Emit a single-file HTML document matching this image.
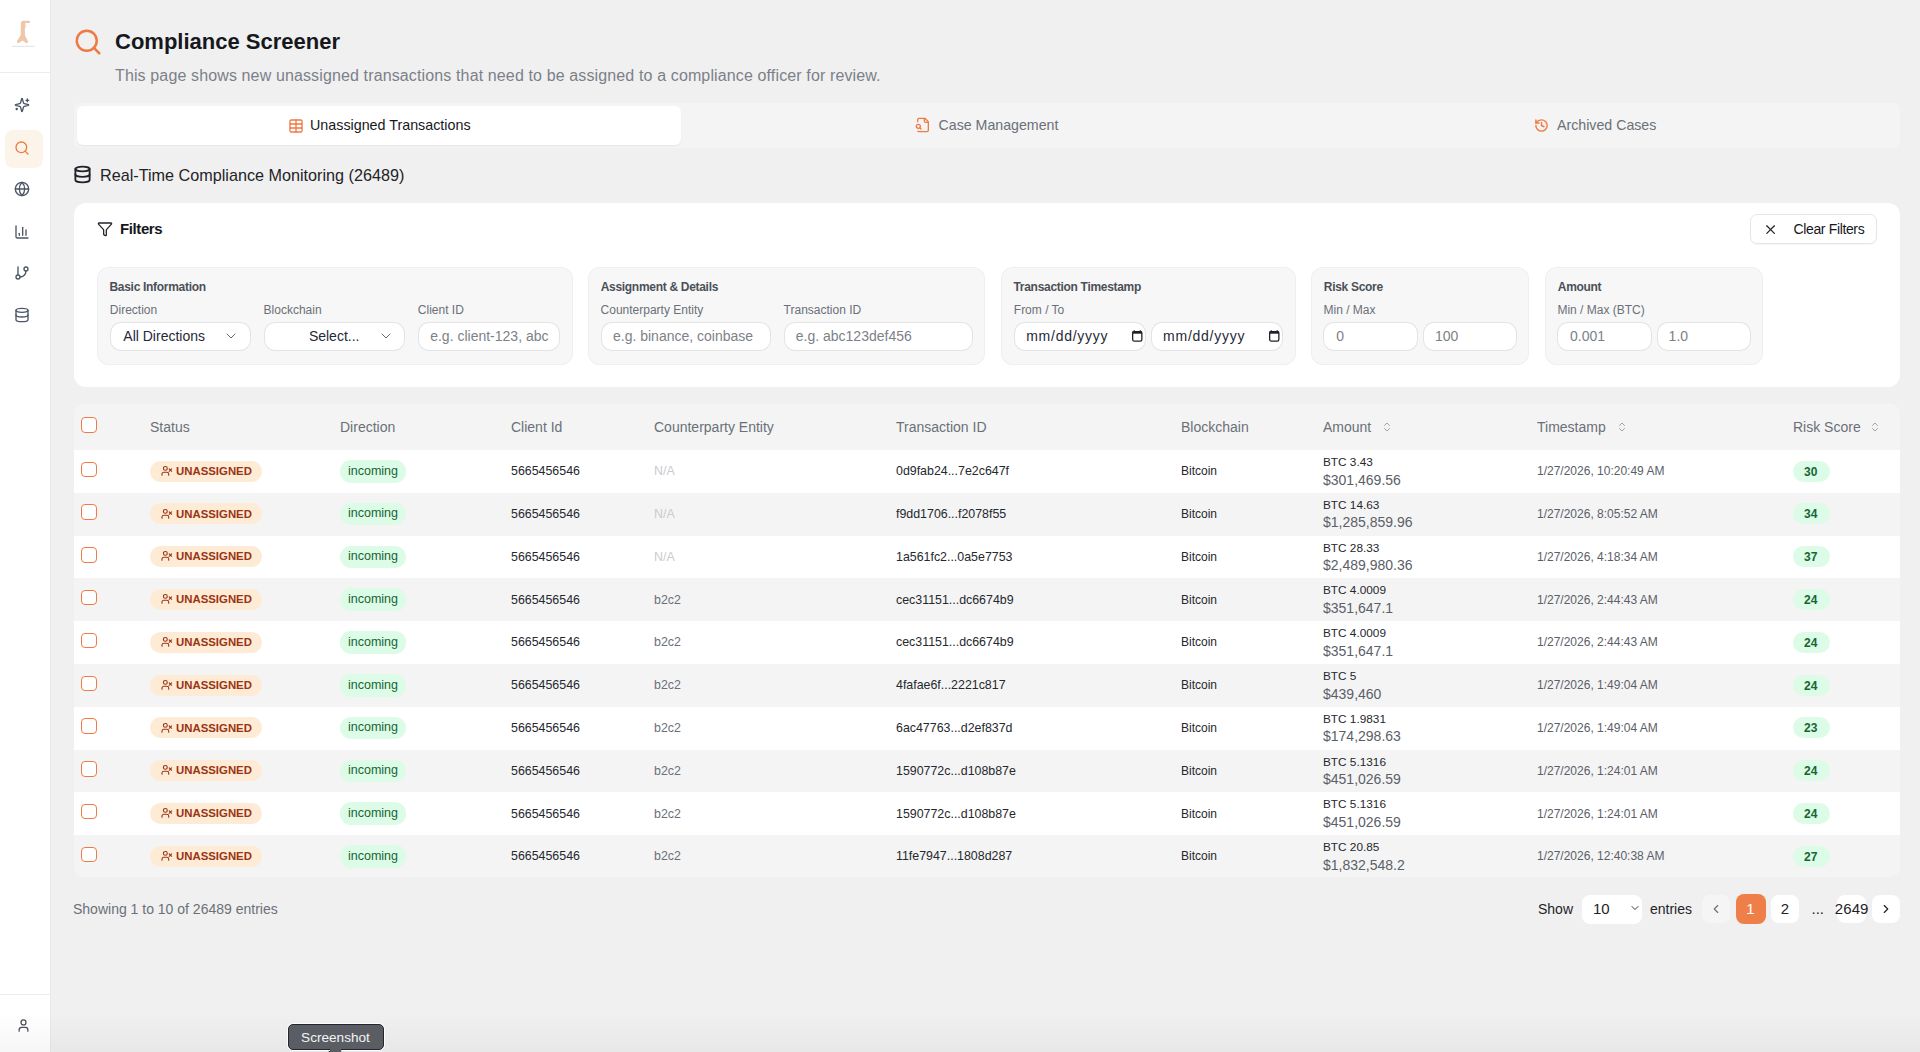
<!DOCTYPE html>
<html><head><meta charset="utf-8">
<style>
*{box-sizing:border-box;margin:0;padding:0}
html,body{width:1920px;height:1052px;overflow:hidden;background:#f0f0f0;font-family:"Liberation Sans",sans-serif;color:#111827}
.a{position:absolute;white-space:nowrap}
.ic{position:absolute;fill:none;stroke-linecap:round;stroke-linejoin:round;overflow:visible}
.grp{position:absolute;top:267px;height:97.5px;background:#f7f7f7;box-shadow:inset 0 0 0 1px #efefef;border-radius:12px}
.gt{position:absolute;top:12.5px;left:12.5px;font-size:12px;font-weight:700;color:#4b5058;letter-spacing:-0.3px;line-height:14px}
.gl{position:absolute;top:35.5px;font-size:12px;color:#6b7078;line-height:14px}
.inp{position:absolute;top:55px;height:29px;background:#fff;box-shadow:inset 0 0 0 1px #e4e4e4;border-radius:11px;font-size:14px;line-height:29px;color:#1f2937}
.ph{color:#7d8188}
.row{position:absolute;left:0;width:1826px;height:43px}
.cell{position:absolute;font-size:12.4px;color:#25282d;white-space:nowrap}
.cb{position:absolute;left:7.4px;width:15.6px;height:15.6px;border:1.3px solid #ee7b45;border-radius:4px;background:#fff}
.bdg{position:absolute;height:21px;border-radius:11px}
</style></head><body>

<div class="a" style="left:0;top:0;width:51px;height:1052px;background:#fff;border-right:1px solid #eaeaea"></div>
<div class="a" style="left:0;top:72px;width:50px;height:1px;background:#ececec"></div>
<div class="a" style="left:0;top:994px;width:50px;height:1px;background:#ececec"></div>
<svg class="a" style="left:0;top:0" width="50" height="60" viewBox="0 0 50 60"><g fill="#f0c6ab"><rect x="21.5" y="20.8" width="8.6" height="2.2" rx="1"/><path d="M21 22 L25.2 22 L25.6 26 L24.8 30 L25.2 36.5 L20.6 37 L20.8 30 Z"/><path d="M20.4 35.5 L25 35.5 L28.2 41.8 L26.6 43.6 L22.6 40.6 L18 43.6 L16.8 41.5 Z"/></g><rect x="12" y="45.8" width="22.7" height="1" fill="#e0e0e0"/></svg>
<div class="a" style="left:5px;top:130px;width:38px;height:38px;background:#fdf4e9;border-radius:8px"></div>
<svg class="ic" style="left:14px;top:97px;stroke:#4b5563;stroke-width:2px" width="16" height="16" viewBox="0 0 24 24"><path d="M9.937 15.5A2 2 0 0 0 8.5 14.063l-6.135-1.582a.5.5 0 0 1 0-.962L8.5 9.936A2 2 0 0 0 9.937 8.5l1.582-6.135a.5.5 0 0 1 .963 0L14.063 8.5A2 2 0 0 0 15.5 9.937l6.135 1.581a.5.5 0 0 1 0 .964L15.5 14.063a2 2 0 0 0-1.437 1.437l-1.582 6.135a.5.5 0 0 1-.963 0z"/><path d="M20 3v4"/><path d="M22 5h-4"/><path d="M4 17v2"/><path d="M5 18H3"/></svg>
<svg class="ic" style="left:14px;top:139.5px;stroke:#ee7b45;stroke-width:2px" width="16" height="16" viewBox="0 0 24 24"><circle cx="11" cy="11" r="8"/><path d="m21 21-4.3-4.3"/></svg>
<svg class="ic" style="left:14px;top:181px;stroke:#4b5563;stroke-width:2px" width="16" height="16" viewBox="0 0 24 24"><circle cx="12" cy="12" r="10"/><path d="M12 2a14.5 14.5 0 0 0 0 20 14.5 14.5 0 0 0 0-20"/><path d="M2 12h20"/></svg>
<svg class="ic" style="left:14px;top:223.5px;stroke:#4b5563;stroke-width:2px" width="16" height="16" viewBox="0 0 24 24"><path d="M3 3v16a2 2 0 0 0 2 2h16"/><path d="M18 17V9"/><path d="M13 17V5"/><path d="M8 17v-3"/></svg>
<svg class="ic" style="left:14px;top:265px;stroke:#4b5563;stroke-width:2px" width="16" height="16" viewBox="0 0 24 24"><line x1="6" x2="6" y1="3" y2="15"/><circle cx="18" cy="6" r="3"/><circle cx="6" cy="18" r="3"/><path d="M18 9a9 9 0 0 1-9 9"/></svg>
<svg class="ic" style="left:14px;top:307px;stroke:#4b5563;stroke-width:2px" width="16" height="16" viewBox="0 0 24 24"><ellipse cx="12" cy="5" rx="9" ry="3"/><path d="M3 5V19A9 3 0 0 0 21 19V5"/><path d="M3 12A9 3 0 0 0 21 12"/></svg>
<svg class="ic" style="left:15.8px;top:1017.9px;stroke:#4b5058;stroke-width:2px" width="15" height="15" viewBox="0 0 24 24"><path d="M19 21v-2a4 4 0 0 0-4-4H9a4 4 0 0 0-4 4v2"/><circle cx="12" cy="7" r="4"/></svg>
<svg class="ic" style="left:73px;top:26.5px;stroke:#ee7b45;stroke-width:2px" width="30" height="30" viewBox="0 0 24 24"><circle cx="11" cy="11" r="8"/><path d="m21 21-4.3-4.3"/></svg>
<div class="a" style="left:115px;top:28.4px;font-size:22px;font-weight:700;line-height:28px;color:#16181d">Compliance Screener</div>
<div class="a" style="left:115px;top:66px;font-size:16px;line-height:20px;color:#7b8089;letter-spacing:0.13px">This page shows new unassigned transactions that need to be assigned to a compliance officer for review.</div>
<div class="a" style="left:74px;top:103px;width:1826px;height:45px;background:#f4f4f4;border-radius:7px"></div>
<div class="a" style="left:77px;top:106px;width:604px;height:39px;background:#fff;border-radius:6px;box-shadow:0 1px 2px rgba(0,0,0,.06)"></div>
<svg class="ic" style="left:287.5px;top:117.5px;stroke:#ee7b45;stroke-width:2px" width="16" height="16" viewBox="0 0 24 24"><rect width="18" height="18" x="3" y="3" rx="2"/><path d="M12 3v18"/><path d="M3 9h18"/><path d="M3 15h18"/></svg>
<div class="a" style="left:310px;top:116.4px;font-size:14.3px;line-height:18px;color:#16181d">Unassigned Transactions</div>
<svg class="ic" style="left:914.5px;top:117px;stroke:#ee7b45;stroke-width:2px" width="16" height="16" viewBox="0 0 24 24"><path d="M14 2v4a2 2 0 0 0 2 2h4"/><path d="M4.268 21a2 2 0 0 0 1.727 1H18a2 2 0 0 0 2-2V7l-5-5H6a2 2 0 0 0-2 2v3"/><path d="m9 18-1.5-1.5"/><circle cx="5" cy="14" r="3"/></svg>
<div class="a" style="left:938.5px;top:116.4px;font-size:14.2px;line-height:18px;color:#6b7078">Case Management</div>
<svg class="ic" style="left:1533.6px;top:117.6px;stroke:#ee7b45;stroke-width:2.3px" width="15" height="15" viewBox="0 0 24 24"><path d="M3 12a9 9 0 1 0 9-9 9.75 9.75 0 0 0-6.74 2.74L3 8"/><path d="M3 3v5h5"/><path d="M12 7v5l4 2"/></svg>
<div class="a" style="left:1557px;top:116.4px;font-size:14.2px;line-height:18px;color:#6b7078">Archived Cases</div>
<svg class="ic" style="left:73.4px;top:165.3px;stroke:#1f2328;stroke-width:2.3px" width="19" height="19" viewBox="0 0 24 24"><ellipse cx="12" cy="5" rx="9" ry="3"/><path d="M3 5V19A9 3 0 0 0 21 19V5"/><path d="M3 12A9 3 0 0 0 21 12"/></svg>
<div class="a" style="left:100px;top:165px;font-size:16.2px;line-height:20px;color:#1f2328">Real-Time Compliance Monitoring (26489)</div>
<div class="a" style="left:74px;top:203px;width:1826px;height:184px;background:#fff;border-radius:12px"></div>
<svg class="ic" style="left:96.8px;top:221.3px;stroke:#1f2328;stroke-width:1.9px" width="16" height="16" viewBox="0 0 24 24"><path d="M10 20a1 1 0 0 0 .553.895l2 1A1 1 0 0 0 14 21v-7a2 2 0 0 1 .517-1.341L21.74 4.67A1 1 0 0 0 21 3H3a1 1 0 0 0-.742 1.67l7.225 7.989A2 2 0 0 1 10 14z"/></svg>
<div class="a" style="left:120px;top:220px;font-size:15px;font-weight:700;line-height:18px;color:#16181d;letter-spacing:-0.4px">Filters</div>
<div class="a" style="left:1750px;top:214px;width:127px;height:30px;background:#fff;border:1px solid #e6e6e6;border-radius:7px;box-shadow:0 1px 1px rgba(0,0,0,.04)"></div>
<svg class="ic" style="left:1762.6px;top:221.6px;stroke:#1f2328;stroke-width:1.9px" width="15.2" height="15.2" viewBox="0 0 24 24"><path d="M18 6 6 18"/><path d="m6 6 12 12"/></svg>
<div class="a" style="left:1793.5px;top:221px;font-size:14px;line-height:16px;color:#16181d;letter-spacing:-0.36px">Clear Filters</div>
<div class="grp" style="left:97px;width:476px"><div class="gt">Basic Information</div><div class="gl" style="left:12.8px">Direction</div><div class="gl" style="left:166.6px">Blockchain</div><div class="gl" style="left:320.8px">Client ID</div><div class="inp" style="left:13.3px;width:141px"><span class="a" style="left:13px;top:0">All Directions</span><svg class="ic" style="left:112.7px;top:6.2px;stroke:#5b6068;stroke-width:1.4px" width="16" height="16" viewBox="0 0 24 24"><path d="m6 9 6 6 6-6"/></svg></div><div class="inp" style="left:167.2px;width:141px"><span class="a" style="left:44.7px;top:0">Select...</span><svg class="ic" style="left:113.5px;top:6.2px;stroke:#5b6068;stroke-width:1.4px" width="16" height="16" viewBox="0 0 24 24"><path d="m6 9 6 6 6-6"/></svg></div><div class="inp" style="left:321px;width:142px"><span class="a ph" style="left:12.2px;top:0">e.g. client-123, abc</span></div></div>
<div class="grp" style="left:588.2px;width:397px"><div class="gt">Assignment &amp; Details</div><div class="gl" style="left:12.4px">Counterparty Entity</div><div class="gl" style="left:195.4px">Transaction ID</div><div class="inp" style="left:12.4px;width:170.6px"><span class="a ph" style="left:12.4px;top:0">e.g. binance, coinbase</span></div><div class="inp" style="left:195.4px;width:189.4px"><span class="a ph" style="left:12.2px;top:0">e.g. abc123def456</span></div></div>
<div class="grp" style="left:1001px;width:294.5px"><div class="gt">Transaction Timestamp</div><div class="gl" style="left:12.8px">From / To</div><div class="inp" style="left:12.8px;width:131.8px"><span class="a" style="left:12.4px;top:0;letter-spacing:0.75px">mm/dd/yyyy</span><svg class="ic" style="left:118px;top:8.3px" width="11" height="12" viewBox="0 0 11 12"><rect x="0.65" y="1.6" width="9.2" height="9.5" rx="1.6" fill="none" stroke="#1f2328" stroke-width="1.3"/><rect x="0.4" y="1.3" width="9.7" height="2.4" fill="#1f2328"/><rect x="1.6" y="0.3" width="1.3" height="1.5" fill="#1f2328"/><rect x="7.6" y="0.3" width="1.3" height="1.5" fill="#1f2328"/></svg></div><div class="inp" style="left:149.7px;width:132.3px"><span class="a" style="left:12.4px;top:0;letter-spacing:0.75px">mm/dd/yyyy</span><svg class="ic" style="left:118px;top:8.3px" width="11" height="12" viewBox="0 0 11 12"><rect x="0.65" y="1.6" width="9.2" height="9.5" rx="1.6" fill="none" stroke="#1f2328" stroke-width="1.3"/><rect x="0.4" y="1.3" width="9.7" height="2.4" fill="#1f2328"/><rect x="1.6" y="0.3" width="1.3" height="1.5" fill="#1f2328"/><rect x="7.6" y="0.3" width="1.3" height="1.5" fill="#1f2328"/></svg></div></div>
<div class="grp" style="left:1311.3px;width:218.2px"><div class="gt">Risk Score</div><div class="gl" style="left:12.2px">Min / Max</div><div class="inp" style="left:12.2px;width:94.5px"><span class="a ph" style="left:12.7px;top:0">0</span></div><div class="inp" style="left:111.6px;width:94.1px"><span class="a ph" style="left:12px;top:0">100</span></div></div>
<div class="grp" style="left:1545.3px;width:218.2px"><div class="gt">Amount</div><div class="gl" style="left:12.1px">Min / Max (BTC)</div><div class="inp" style="left:12.1px;width:94.6px"><span class="a ph" style="left:12.6px;top:0">0.001</span></div><div class="inp" style="left:111.5px;width:94.2px"><span class="a ph" style="left:11.8px;top:0">1.0</span></div></div>
<div class="a" style="left:74px;top:404px;width:1826px;height:473px;background:#f4f4f4;border-radius:10px;overflow:hidden">
<div class="cb" style="top:13px"></div>
<div class="a" style="left:76px;top:14px;font-size:14px;line-height:18px;color:#6b7078">Status</div>
<div class="a" style="left:266px;top:14px;font-size:14px;line-height:18px;color:#6b7078">Direction</div>
<div class="a" style="left:437px;top:14px;font-size:14px;line-height:18px;color:#6b7078">Client Id</div>
<div class="a" style="left:580px;top:14px;font-size:14px;line-height:18px;color:#6b7078">Counterparty Entity</div>
<div class="a" style="left:822px;top:14px;font-size:14px;line-height:18px;color:#6b7078">Transaction ID</div>
<div class="a" style="left:1107px;top:14px;font-size:14px;line-height:18px;color:#6b7078">Blockchain</div>
<div class="a" style="left:1249px;top:14px;font-size:14px;line-height:18px;color:#6b7078">Amount</div>
<div class="a" style="left:1463px;top:14px;font-size:14px;line-height:18px;color:#6b7078">Timestamp</div>
<div class="a" style="left:1719px;top:14px;font-size:14px;line-height:18px;color:#6b7078">Risk Score</div>
<svg class="ic" style="left:1307px;top:17px;stroke:#9ca3af;stroke-width:2px" width="12" height="12" viewBox="0 0 24 24"><path d="m7 15 5 5 5-5"/><path d="m7 9 5-5 5 5"/></svg>
<svg class="ic" style="left:1542px;top:17px;stroke:#9ca3af;stroke-width:2px" width="12" height="12" viewBox="0 0 24 24"><path d="m7 15 5 5 5-5"/><path d="m7 9 5-5 5 5"/></svg>
<svg class="ic" style="left:1794.5px;top:17px;stroke:#9ca3af;stroke-width:2px" width="12" height="12" viewBox="0 0 24 24"><path d="m7 15 5 5 5-5"/><path d="m7 9 5-5 5 5"/></svg>
<div class="row" style="top:46.0px;background:#fff">
<div class="cb" style="top:11.5px"></div>
<div class="bdg" style="left:76px;top:10.5px;width:112px;background:#feebd6"></div>
<svg class="ic" style="left:86.6px;top:14.8px;stroke:#9a3412;stroke-width:2.3px" width="11.6" height="11.6" viewBox="0 0 24 24"><path d="M16 21v-2a4 4 0 0 0-4-4H6a4 4 0 0 0-4 4v2"/><circle cx="9" cy="7" r="4"/><line x1="17" x2="22" y1="8" y2="13"/><line x1="22" x2="17" y1="8" y2="13"/></svg>
<div class="cell" style="left:102px;top:13.8px;font-size:11.4px;line-height:14px;font-weight:700;color:#9a3412">UNASSIGNED</div>
<div class="bdg" style="left:266.4px;top:10px;width:65.4px;height:22.7px;background:#dcfce7"></div>
<div class="cell" style="left:274px;top:13.5px;font-size:12.5px;line-height:15px;color:#166534">incoming</div>
<div class="cell" style="left:437px;top:14.2px;line-height:15px">5665456546</div>
<div class="cell" style="left:580px;top:14.2px;line-height:15px;color:#c9cbcf">N/A</div>
<div class="cell" style="left:822px;top:14.2px;line-height:15px">0d9fab24...7e2c647f</div>
<div class="cell" style="left:1107px;top:14.2px;line-height:15px;font-size:12px">Bitcoin</div>
<div class="cell" style="left:1249px;top:5px;line-height:15px;font-size:11.8px">BTC 3.43</div>
<div class="cell" style="left:1249px;top:20.5px;line-height:18px;font-size:14px;color:#5b6068">$301,469.56</div>
<div class="cell" style="left:1463px;top:14.2px;line-height:15px;font-size:12px;color:#5b6068">1/27/2026, 10:20:49 AM</div>
<div class="bdg" style="left:1719px;top:10.5px;width:37px;background:#dcfce7"></div>
<div class="cell" style="left:1730px;top:14.5px;line-height:14px;font-size:12px;font-weight:700;color:#166534">30</div>
</div>
<div class="row" style="top:88.8px;background:#f4f4f4">
<div class="cb" style="top:11.5px"></div>
<div class="bdg" style="left:76px;top:10.5px;width:112px;background:#feebd6"></div>
<svg class="ic" style="left:86.6px;top:14.8px;stroke:#9a3412;stroke-width:2.3px" width="11.6" height="11.6" viewBox="0 0 24 24"><path d="M16 21v-2a4 4 0 0 0-4-4H6a4 4 0 0 0-4 4v2"/><circle cx="9" cy="7" r="4"/><line x1="17" x2="22" y1="8" y2="13"/><line x1="22" x2="17" y1="8" y2="13"/></svg>
<div class="cell" style="left:102px;top:13.8px;font-size:11.4px;line-height:14px;font-weight:700;color:#9a3412">UNASSIGNED</div>
<div class="bdg" style="left:266.4px;top:10px;width:65.4px;height:22.7px;background:#dcfce7"></div>
<div class="cell" style="left:274px;top:13.5px;font-size:12.5px;line-height:15px;color:#166534">incoming</div>
<div class="cell" style="left:437px;top:14.2px;line-height:15px">5665456546</div>
<div class="cell" style="left:580px;top:14.2px;line-height:15px;color:#c9cbcf">N/A</div>
<div class="cell" style="left:822px;top:14.2px;line-height:15px">f9dd1706...f2078f55</div>
<div class="cell" style="left:1107px;top:14.2px;line-height:15px;font-size:12px">Bitcoin</div>
<div class="cell" style="left:1249px;top:5px;line-height:15px;font-size:11.8px">BTC 14.63</div>
<div class="cell" style="left:1249px;top:20.5px;line-height:18px;font-size:14px;color:#5b6068">$1,285,859.96</div>
<div class="cell" style="left:1463px;top:14.2px;line-height:15px;font-size:12px;color:#5b6068">1/27/2026, 8:05:52 AM</div>
<div class="bdg" style="left:1719px;top:10.5px;width:37px;background:#dcfce7"></div>
<div class="cell" style="left:1730px;top:14.5px;line-height:14px;font-size:12px;font-weight:700;color:#166534">34</div>
</div>
<div class="row" style="top:131.6px;background:#fff">
<div class="cb" style="top:11.5px"></div>
<div class="bdg" style="left:76px;top:10.5px;width:112px;background:#feebd6"></div>
<svg class="ic" style="left:86.6px;top:14.8px;stroke:#9a3412;stroke-width:2.3px" width="11.6" height="11.6" viewBox="0 0 24 24"><path d="M16 21v-2a4 4 0 0 0-4-4H6a4 4 0 0 0-4 4v2"/><circle cx="9" cy="7" r="4"/><line x1="17" x2="22" y1="8" y2="13"/><line x1="22" x2="17" y1="8" y2="13"/></svg>
<div class="cell" style="left:102px;top:13.8px;font-size:11.4px;line-height:14px;font-weight:700;color:#9a3412">UNASSIGNED</div>
<div class="bdg" style="left:266.4px;top:10px;width:65.4px;height:22.7px;background:#dcfce7"></div>
<div class="cell" style="left:274px;top:13.5px;font-size:12.5px;line-height:15px;color:#166534">incoming</div>
<div class="cell" style="left:437px;top:14.2px;line-height:15px">5665456546</div>
<div class="cell" style="left:580px;top:14.2px;line-height:15px;color:#c9cbcf">N/A</div>
<div class="cell" style="left:822px;top:14.2px;line-height:15px">1a561fc2...0a5e7753</div>
<div class="cell" style="left:1107px;top:14.2px;line-height:15px;font-size:12px">Bitcoin</div>
<div class="cell" style="left:1249px;top:5px;line-height:15px;font-size:11.8px">BTC 28.33</div>
<div class="cell" style="left:1249px;top:20.5px;line-height:18px;font-size:14px;color:#5b6068">$2,489,980.36</div>
<div class="cell" style="left:1463px;top:14.2px;line-height:15px;font-size:12px;color:#5b6068">1/27/2026, 4:18:34 AM</div>
<div class="bdg" style="left:1719px;top:10.5px;width:37px;background:#dcfce7"></div>
<div class="cell" style="left:1730px;top:14.5px;line-height:14px;font-size:12px;font-weight:700;color:#166534">37</div>
</div>
<div class="row" style="top:174.4px;background:#f4f4f4">
<div class="cb" style="top:11.5px"></div>
<div class="bdg" style="left:76px;top:10.5px;width:112px;background:#feebd6"></div>
<svg class="ic" style="left:86.6px;top:14.8px;stroke:#9a3412;stroke-width:2.3px" width="11.6" height="11.6" viewBox="0 0 24 24"><path d="M16 21v-2a4 4 0 0 0-4-4H6a4 4 0 0 0-4 4v2"/><circle cx="9" cy="7" r="4"/><line x1="17" x2="22" y1="8" y2="13"/><line x1="22" x2="17" y1="8" y2="13"/></svg>
<div class="cell" style="left:102px;top:13.8px;font-size:11.4px;line-height:14px;font-weight:700;color:#9a3412">UNASSIGNED</div>
<div class="bdg" style="left:266.4px;top:10px;width:65.4px;height:22.7px;background:#dcfce7"></div>
<div class="cell" style="left:274px;top:13.5px;font-size:12.5px;line-height:15px;color:#166534">incoming</div>
<div class="cell" style="left:437px;top:14.2px;line-height:15px">5665456546</div>
<div class="cell" style="left:580px;top:14.2px;line-height:15px;color:#6b7078">b2c2</div>
<div class="cell" style="left:822px;top:14.2px;line-height:15px">cec31151...dc6674b9</div>
<div class="cell" style="left:1107px;top:14.2px;line-height:15px;font-size:12px">Bitcoin</div>
<div class="cell" style="left:1249px;top:5px;line-height:15px;font-size:11.8px">BTC 4.0009</div>
<div class="cell" style="left:1249px;top:20.5px;line-height:18px;font-size:14px;color:#5b6068">$351,647.1</div>
<div class="cell" style="left:1463px;top:14.2px;line-height:15px;font-size:12px;color:#5b6068">1/27/2026, 2:44:43 AM</div>
<div class="bdg" style="left:1719px;top:10.5px;width:37px;background:#dcfce7"></div>
<div class="cell" style="left:1730px;top:14.5px;line-height:14px;font-size:12px;font-weight:700;color:#166534">24</div>
</div>
<div class="row" style="top:217.2px;background:#fff">
<div class="cb" style="top:11.5px"></div>
<div class="bdg" style="left:76px;top:10.5px;width:112px;background:#feebd6"></div>
<svg class="ic" style="left:86.6px;top:14.8px;stroke:#9a3412;stroke-width:2.3px" width="11.6" height="11.6" viewBox="0 0 24 24"><path d="M16 21v-2a4 4 0 0 0-4-4H6a4 4 0 0 0-4 4v2"/><circle cx="9" cy="7" r="4"/><line x1="17" x2="22" y1="8" y2="13"/><line x1="22" x2="17" y1="8" y2="13"/></svg>
<div class="cell" style="left:102px;top:13.8px;font-size:11.4px;line-height:14px;font-weight:700;color:#9a3412">UNASSIGNED</div>
<div class="bdg" style="left:266.4px;top:10px;width:65.4px;height:22.7px;background:#dcfce7"></div>
<div class="cell" style="left:274px;top:13.5px;font-size:12.5px;line-height:15px;color:#166534">incoming</div>
<div class="cell" style="left:437px;top:14.2px;line-height:15px">5665456546</div>
<div class="cell" style="left:580px;top:14.2px;line-height:15px;color:#6b7078">b2c2</div>
<div class="cell" style="left:822px;top:14.2px;line-height:15px">cec31151...dc6674b9</div>
<div class="cell" style="left:1107px;top:14.2px;line-height:15px;font-size:12px">Bitcoin</div>
<div class="cell" style="left:1249px;top:5px;line-height:15px;font-size:11.8px">BTC 4.0009</div>
<div class="cell" style="left:1249px;top:20.5px;line-height:18px;font-size:14px;color:#5b6068">$351,647.1</div>
<div class="cell" style="left:1463px;top:14.2px;line-height:15px;font-size:12px;color:#5b6068">1/27/2026, 2:44:43 AM</div>
<div class="bdg" style="left:1719px;top:10.5px;width:37px;background:#dcfce7"></div>
<div class="cell" style="left:1730px;top:14.5px;line-height:14px;font-size:12px;font-weight:700;color:#166534">24</div>
</div>
<div class="row" style="top:260.0px;background:#f4f4f4">
<div class="cb" style="top:11.5px"></div>
<div class="bdg" style="left:76px;top:10.5px;width:112px;background:#feebd6"></div>
<svg class="ic" style="left:86.6px;top:14.8px;stroke:#9a3412;stroke-width:2.3px" width="11.6" height="11.6" viewBox="0 0 24 24"><path d="M16 21v-2a4 4 0 0 0-4-4H6a4 4 0 0 0-4 4v2"/><circle cx="9" cy="7" r="4"/><line x1="17" x2="22" y1="8" y2="13"/><line x1="22" x2="17" y1="8" y2="13"/></svg>
<div class="cell" style="left:102px;top:13.8px;font-size:11.4px;line-height:14px;font-weight:700;color:#9a3412">UNASSIGNED</div>
<div class="bdg" style="left:266.4px;top:10px;width:65.4px;height:22.7px;background:#dcfce7"></div>
<div class="cell" style="left:274px;top:13.5px;font-size:12.5px;line-height:15px;color:#166534">incoming</div>
<div class="cell" style="left:437px;top:14.2px;line-height:15px">5665456546</div>
<div class="cell" style="left:580px;top:14.2px;line-height:15px;color:#6b7078">b2c2</div>
<div class="cell" style="left:822px;top:14.2px;line-height:15px">4fafae6f...2221c817</div>
<div class="cell" style="left:1107px;top:14.2px;line-height:15px;font-size:12px">Bitcoin</div>
<div class="cell" style="left:1249px;top:5px;line-height:15px;font-size:11.8px">BTC 5</div>
<div class="cell" style="left:1249px;top:20.5px;line-height:18px;font-size:14px;color:#5b6068">$439,460</div>
<div class="cell" style="left:1463px;top:14.2px;line-height:15px;font-size:12px;color:#5b6068">1/27/2026, 1:49:04 AM</div>
<div class="bdg" style="left:1719px;top:10.5px;width:37px;background:#dcfce7"></div>
<div class="cell" style="left:1730px;top:14.5px;line-height:14px;font-size:12px;font-weight:700;color:#166534">24</div>
</div>
<div class="row" style="top:302.8px;background:#fff">
<div class="cb" style="top:11.5px"></div>
<div class="bdg" style="left:76px;top:10.5px;width:112px;background:#feebd6"></div>
<svg class="ic" style="left:86.6px;top:14.8px;stroke:#9a3412;stroke-width:2.3px" width="11.6" height="11.6" viewBox="0 0 24 24"><path d="M16 21v-2a4 4 0 0 0-4-4H6a4 4 0 0 0-4 4v2"/><circle cx="9" cy="7" r="4"/><line x1="17" x2="22" y1="8" y2="13"/><line x1="22" x2="17" y1="8" y2="13"/></svg>
<div class="cell" style="left:102px;top:13.8px;font-size:11.4px;line-height:14px;font-weight:700;color:#9a3412">UNASSIGNED</div>
<div class="bdg" style="left:266.4px;top:10px;width:65.4px;height:22.7px;background:#dcfce7"></div>
<div class="cell" style="left:274px;top:13.5px;font-size:12.5px;line-height:15px;color:#166534">incoming</div>
<div class="cell" style="left:437px;top:14.2px;line-height:15px">5665456546</div>
<div class="cell" style="left:580px;top:14.2px;line-height:15px;color:#6b7078">b2c2</div>
<div class="cell" style="left:822px;top:14.2px;line-height:15px">6ac47763...d2ef837d</div>
<div class="cell" style="left:1107px;top:14.2px;line-height:15px;font-size:12px">Bitcoin</div>
<div class="cell" style="left:1249px;top:5px;line-height:15px;font-size:11.8px">BTC 1.9831</div>
<div class="cell" style="left:1249px;top:20.5px;line-height:18px;font-size:14px;color:#5b6068">$174,298.63</div>
<div class="cell" style="left:1463px;top:14.2px;line-height:15px;font-size:12px;color:#5b6068">1/27/2026, 1:49:04 AM</div>
<div class="bdg" style="left:1719px;top:10.5px;width:37px;background:#dcfce7"></div>
<div class="cell" style="left:1730px;top:14.5px;line-height:14px;font-size:12px;font-weight:700;color:#166534">23</div>
</div>
<div class="row" style="top:345.6px;background:#f4f4f4">
<div class="cb" style="top:11.5px"></div>
<div class="bdg" style="left:76px;top:10.5px;width:112px;background:#feebd6"></div>
<svg class="ic" style="left:86.6px;top:14.8px;stroke:#9a3412;stroke-width:2.3px" width="11.6" height="11.6" viewBox="0 0 24 24"><path d="M16 21v-2a4 4 0 0 0-4-4H6a4 4 0 0 0-4 4v2"/><circle cx="9" cy="7" r="4"/><line x1="17" x2="22" y1="8" y2="13"/><line x1="22" x2="17" y1="8" y2="13"/></svg>
<div class="cell" style="left:102px;top:13.8px;font-size:11.4px;line-height:14px;font-weight:700;color:#9a3412">UNASSIGNED</div>
<div class="bdg" style="left:266.4px;top:10px;width:65.4px;height:22.7px;background:#dcfce7"></div>
<div class="cell" style="left:274px;top:13.5px;font-size:12.5px;line-height:15px;color:#166534">incoming</div>
<div class="cell" style="left:437px;top:14.2px;line-height:15px">5665456546</div>
<div class="cell" style="left:580px;top:14.2px;line-height:15px;color:#6b7078">b2c2</div>
<div class="cell" style="left:822px;top:14.2px;line-height:15px">1590772c...d108b87e</div>
<div class="cell" style="left:1107px;top:14.2px;line-height:15px;font-size:12px">Bitcoin</div>
<div class="cell" style="left:1249px;top:5px;line-height:15px;font-size:11.8px">BTC 5.1316</div>
<div class="cell" style="left:1249px;top:20.5px;line-height:18px;font-size:14px;color:#5b6068">$451,026.59</div>
<div class="cell" style="left:1463px;top:14.2px;line-height:15px;font-size:12px;color:#5b6068">1/27/2026, 1:24:01 AM</div>
<div class="bdg" style="left:1719px;top:10.5px;width:37px;background:#dcfce7"></div>
<div class="cell" style="left:1730px;top:14.5px;line-height:14px;font-size:12px;font-weight:700;color:#166534">24</div>
</div>
<div class="row" style="top:388.4px;background:#fff">
<div class="cb" style="top:11.5px"></div>
<div class="bdg" style="left:76px;top:10.5px;width:112px;background:#feebd6"></div>
<svg class="ic" style="left:86.6px;top:14.8px;stroke:#9a3412;stroke-width:2.3px" width="11.6" height="11.6" viewBox="0 0 24 24"><path d="M16 21v-2a4 4 0 0 0-4-4H6a4 4 0 0 0-4 4v2"/><circle cx="9" cy="7" r="4"/><line x1="17" x2="22" y1="8" y2="13"/><line x1="22" x2="17" y1="8" y2="13"/></svg>
<div class="cell" style="left:102px;top:13.8px;font-size:11.4px;line-height:14px;font-weight:700;color:#9a3412">UNASSIGNED</div>
<div class="bdg" style="left:266.4px;top:10px;width:65.4px;height:22.7px;background:#dcfce7"></div>
<div class="cell" style="left:274px;top:13.5px;font-size:12.5px;line-height:15px;color:#166534">incoming</div>
<div class="cell" style="left:437px;top:14.2px;line-height:15px">5665456546</div>
<div class="cell" style="left:580px;top:14.2px;line-height:15px;color:#6b7078">b2c2</div>
<div class="cell" style="left:822px;top:14.2px;line-height:15px">1590772c...d108b87e</div>
<div class="cell" style="left:1107px;top:14.2px;line-height:15px;font-size:12px">Bitcoin</div>
<div class="cell" style="left:1249px;top:5px;line-height:15px;font-size:11.8px">BTC 5.1316</div>
<div class="cell" style="left:1249px;top:20.5px;line-height:18px;font-size:14px;color:#5b6068">$451,026.59</div>
<div class="cell" style="left:1463px;top:14.2px;line-height:15px;font-size:12px;color:#5b6068">1/27/2026, 1:24:01 AM</div>
<div class="bdg" style="left:1719px;top:10.5px;width:37px;background:#dcfce7"></div>
<div class="cell" style="left:1730px;top:14.5px;line-height:14px;font-size:12px;font-weight:700;color:#166534">24</div>
</div>
<div class="row" style="top:431.2px;background:#f4f4f4">
<div class="cb" style="top:11.5px"></div>
<div class="bdg" style="left:76px;top:10.5px;width:112px;background:#feebd6"></div>
<svg class="ic" style="left:86.6px;top:14.8px;stroke:#9a3412;stroke-width:2.3px" width="11.6" height="11.6" viewBox="0 0 24 24"><path d="M16 21v-2a4 4 0 0 0-4-4H6a4 4 0 0 0-4 4v2"/><circle cx="9" cy="7" r="4"/><line x1="17" x2="22" y1="8" y2="13"/><line x1="22" x2="17" y1="8" y2="13"/></svg>
<div class="cell" style="left:102px;top:13.8px;font-size:11.4px;line-height:14px;font-weight:700;color:#9a3412">UNASSIGNED</div>
<div class="bdg" style="left:266.4px;top:10px;width:65.4px;height:22.7px;background:#dcfce7"></div>
<div class="cell" style="left:274px;top:13.5px;font-size:12.5px;line-height:15px;color:#166534">incoming</div>
<div class="cell" style="left:437px;top:14.2px;line-height:15px">5665456546</div>
<div class="cell" style="left:580px;top:14.2px;line-height:15px;color:#6b7078">b2c2</div>
<div class="cell" style="left:822px;top:14.2px;line-height:15px">11fe7947...1808d287</div>
<div class="cell" style="left:1107px;top:14.2px;line-height:15px;font-size:12px">Bitcoin</div>
<div class="cell" style="left:1249px;top:5px;line-height:15px;font-size:11.8px">BTC 20.85</div>
<div class="cell" style="left:1249px;top:20.5px;line-height:18px;font-size:14px;color:#5b6068">$1,832,548.2</div>
<div class="cell" style="left:1463px;top:14.2px;line-height:15px;font-size:12px;color:#5b6068">1/27/2026, 12:40:38 AM</div>
<div class="bdg" style="left:1719px;top:10.5px;width:37px;background:#dcfce7"></div>
<div class="cell" style="left:1730px;top:14.5px;line-height:14px;font-size:12px;font-weight:700;color:#166534">27</div>
</div>
</div>
<div class="a" style="left:73px;top:900px;font-size:14px;line-height:18px;color:#6b7078">Showing 1 to 10 of 26489 entries</div>
<div class="a" style="left:1538px;top:900px;font-size:14px;line-height:18px;color:#1f2328">Show</div>
<div class="a" style="left:1582px;top:894.5px;width:60px;height:29px;background:#fff;border-radius:8px"></div>
<div class="a" style="left:1593px;top:899px;font-size:15px;line-height:20px;color:#1f2328">10</div>
<svg class="ic" style="left:1628px;top:902px;stroke:#1f2328;stroke-width:1.8px" width="14" height="12" viewBox="0 0 24 24"><path d="m6 9 6 6 6-6"/></svg>
<div class="a" style="left:1650px;top:900px;font-size:14px;line-height:18px;color:#1f2328">entries</div>
<div class="a" style="left:1702px;top:895px;width:28px;height:28px;background:#f5f5f5;border-radius:8px"></div>
<svg class="ic" style="left:1709px;top:902px;stroke:#6b7078;stroke-width:2px" width="14" height="14" viewBox="0 0 24 24"><path d="m15 18-6-6 6-6"/></svg>
<div class="a" style="left:1735.5px;top:894px;width:30px;height:30px;background:#ef7f48;border-radius:8px;color:#fff;font-size:15px;line-height:30px;text-align:center">1</div>
<div class="a" style="left:1771px;top:895px;width:28px;height:28px;background:#fff;border-radius:8px;color:#1f2328;font-size:15px;line-height:28px;text-align:center">2</div>
<div class="a" style="left:1811.5px;top:899px;font-size:15px;line-height:20px;color:#1f2328">...</div>
<div class="a" style="left:1837px;top:895px;width:29px;height:28px;background:#fff;border-radius:8px"></div>
<div class="a" style="left:1834.8px;top:899.5px;font-size:15px;line-height:18px;color:#1f2328;letter-spacing:0.1px">2649</div>
<div class="a" style="left:1872px;top:895px;width:28px;height:28px;background:#fff;border-radius:8px"></div>
<svg class="ic" style="left:1879px;top:902px;stroke:#1f2328;stroke-width:2px" width="14" height="14" viewBox="0 0 24 24"><path d="m9 18 6-6-6-6"/></svg>
<div class="a" style="left:0;top:1012px;width:1920px;height:40px;background:linear-gradient(to bottom,rgba(0,0,0,0),rgba(0,0,0,0.035))"></div>
<div class="a" style="left:329px;top:1043px;width:12px;height:12px;background:#5a5d64;border:1.5px solid #25272b;transform:rotate(45deg)"></div>
<div class="a" style="left:287.5px;top:1023.5px;width:96px;height:26px;background:#5a5d64;border:1.5px solid #25272b;border-radius:5px;box-shadow:0 0 0 1px rgba(255,255,255,.85);color:#f4f4f4;font-size:13.6px;line-height:24px;text-align:center;padding-top:1px">Screenshot</div>
<div class="a" style="left:330px;top:1046px;width:11px;height:8px;background:#5a5d64"></div>
</body></html>
